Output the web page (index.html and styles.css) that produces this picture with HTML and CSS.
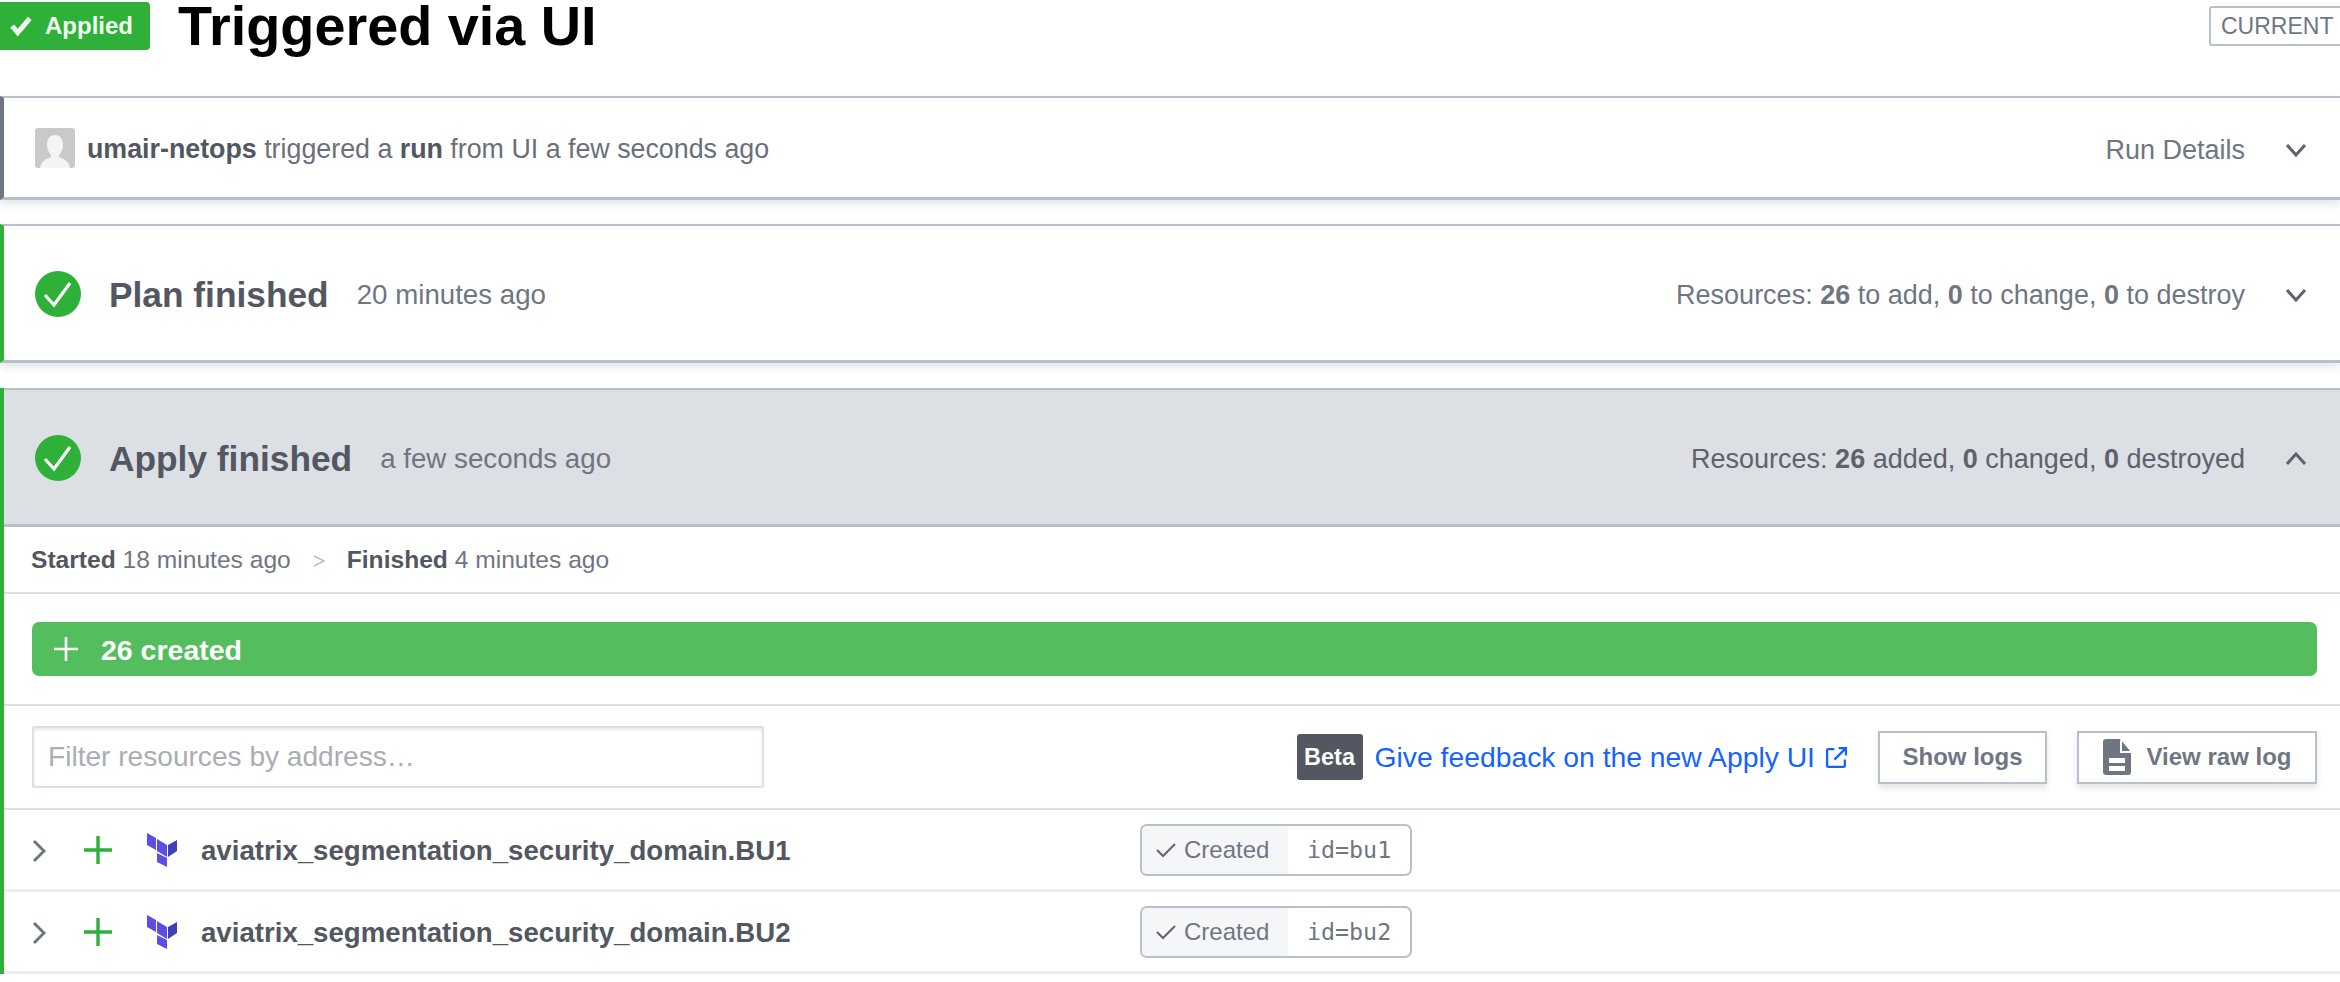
FILE: index.html
```html
<!DOCTYPE html>
<html lang="en">
<head>
<meta charset="utf-8">
<title>Triggered via UI</title>
<link rel="stylesheet" href="styles.css">
</head>
<body>
<header class="page-head">
  <span class="applied"><svg class="applied-check" viewBox="0 0 20 20"><path d="M2 10l5 6L18 3" fill="none" stroke="#f2fbf2" stroke-width="4.500"/></svg>Applied</span>
  <h1>Triggered via UI</h1>
  <span class="current">CURRENT</span>
</header>

<section class="card card-run">
  <div class="card-left">
    <svg class="avatar" viewBox="0 0 40 40"><rect width="40" height="40" rx="3" fill="#c9c9c9"/><path d="M20 7c5 0 8 4 8 10 0 4-2 8-4 10v2c5 2 10 4 11 11H5c1-7 6-9 11-11v-2c-2-2-4-6-4-10 0-6 3-10 8-10z" fill="#f4f4f4"/></svg>
    <span class="run-text"><b>umair-netops</b> triggered a <b>run</b> from UI a few seconds ago</span>
  </div>
  <div class="card-right">
    <span>Run Details</span>
    <svg class="chev" viewBox="0 0 22 14"><path d="M2 2l9 10 9-10" fill="none" stroke="currentColor" stroke-width="3"/></svg>
  </div>
</section>

<section class="card card-plan">
  <div class="card-left">
    <svg class="status" viewBox="0 0 46 46"><circle cx="23" cy="23" r="23" fill="#2eb039"/><path d="M10 24l9 10 16-22" fill="none" stroke="#fff" stroke-width="3.2"/></svg>
    <h2>Plan finished</h2>
    <span class="ago">20 minutes ago</span>
  </div>
  <div class="card-right">
    <span>Resources: <b>26</b> to add, <b>0</b> to change, <b>0</b> to destroy</span>
    <svg class="chev" viewBox="0 0 22 14"><path d="M2 2l9 10 9-10" fill="none" stroke="currentColor" stroke-width="3"/></svg>
  </div>
</section>

<section class="apply">
  <div class="card-head">
    <div class="card-left">
      <svg class="status" viewBox="0 0 46 46"><circle cx="23" cy="23" r="23" fill="#2eb039"/><path d="M10 24l9 10 16-22" fill="none" stroke="#fff" stroke-width="3.2"/></svg>
      <h2>Apply finished</h2>
      <span class="ago">a few seconds ago</span>
    </div>
    <div class="card-right dark">
      <span>Resources: <b>26</b> added, <b>0</b> changed, <b>0</b> destroyed</span>
      <svg class="chev" viewBox="0 0 22 14"><path d="M2 12l9-10 9 10" fill="none" stroke="currentColor" stroke-width="3"/></svg>
    </div>
  </div>

  <div class="times">
    <span><b>Started</b> 18 minutes ago</span>
    <svg class="sep" viewBox="0 0 14 14"><path d="M2 2l10 5-10 5" fill="none" stroke="#b8c0cc" stroke-width="1.6"/></svg>
    <span><b>Finished</b> 4 minutes ago</span>
  </div>

  <div class="summary">
    <div class="created-bar">
      <svg class="bar-plus" viewBox="0 0 24 24"><path d="M12 0v24M0 12h24" stroke="#fff" stroke-width="2.600"/></svg>
      <span>26 created</span>
    </div>
  </div>

  <div class="toolbar">
    <input class="filter" type="text" placeholder="Filter resources by address…">
    <div class="tools">
      <span class="beta">Beta</span>
      <a class="feedback">Give feedback on the new Apply UI<svg class="ext" viewBox="0 0 22 22"><path d="M9 3H3a1 1 0 0 0-1 1v15a1 1 0 0 0 1 1h15a1 1 0 0 0 1-1v-6M13 2h7v7M20 2L9 13" fill="none" stroke="#1563ff" stroke-width="2.200"/></svg></a>
      <button class="btn btn-show">Show logs</button>
      <button class="btn btn-raw"><svg class="doc" viewBox="0 0 28 36"><path d="M3 0h14l11 13v20a3 3 0 0 1-3 3H3a3 3 0 0 1-3-3V3a3 3 0 0 1 3-3z" fill="#6f7682"/><path d="M18 1v12h10" fill="none" stroke="#fff" stroke-width="2"/><path d="M6 19h16v5H6zM6 27h16v5H6z" fill="#fff"/></svg>View raw log</button>
    </div>
  </div>

  <div class="row">
    <svg class="row-chev" viewBox="0 0 14 24"><path d="M2 2l10 10L2 22" fill="none" stroke="#6f7682" stroke-width="3"/></svg>
    <svg class="row-plus" viewBox="0 0 28 28"><path d="M14 0v28M0 14h28" stroke="#2eb039" stroke-width="3.400"/></svg>
    <svg class="tf" viewBox="0 0 31 34"><path d="M0 0l9 5v12L0 12z" fill="#5c4ee5"/><path d="M10 6l10 6v12l-10-6z" fill="#5c4ee5"/><path d="M21 12l9-5v11l-9 6z" fill="#4040b2"/><path d="M10 20l10 5v9l-10-5z" fill="#5c4ee5"/></svg>
    <span class="res">aviatrix_segmentation_security_domain.BU1</span>
    <span class="pill"><span class="pill-state"><svg class="pill-check" viewBox="0 0 20 16"><path d="M1 8l6 6L19 2" fill="none" stroke="#5f6672" stroke-width="2"/></svg>Created</span><code>id=bu1</code></span>
  </div>
  <div class="row">
    <svg class="row-chev" viewBox="0 0 14 24"><path d="M2 2l10 10L2 22" fill="none" stroke="#6f7682" stroke-width="3"/></svg>
    <svg class="row-plus" viewBox="0 0 28 28"><path d="M14 0v28M0 14h28" stroke="#2eb039" stroke-width="3.400"/></svg>
    <svg class="tf" viewBox="0 0 31 34"><path d="M0 0l9 5v12L0 12z" fill="#5c4ee5"/><path d="M10 6l10 6v12l-10-6z" fill="#5c4ee5"/><path d="M21 12l9-5v11l-9 6z" fill="#4040b2"/><path d="M10 20l10 5v9l-10-5z" fill="#5c4ee5"/></svg>
    <span class="res">aviatrix_segmentation_security_domain.BU2</span>
    <span class="pill"><span class="pill-state"><svg class="pill-check" viewBox="0 0 20 16"><path d="M1 8l6 6L19 2" fill="none" stroke="#5f6672" stroke-width="2"/></svg>Created</span><code>id=bu2</code></span>
  </div>
</section>
</body>
</html>
```

FILE: styles.css
```css
* { box-sizing: border-box; }
html, body { margin: 0; height: 982px; overflow: hidden; background: #fff; }
body { font-family: "Liberation Sans", Arial, sans-serif; color: #525761; font-size: 27px; }
b { font-weight: 700; }
h1, h2 { margin: 0; }

.page-head { height: 96px; display: flex; align-items: flex-start; position: relative; }
.applied { width: 150px; height: 48px; margin-top: 2px; background: #2eb039; color: #f2fbf2; border-radius: 0 4px 4px 0; font-size: 24px; font-weight: 700; display: flex; align-items: center; padding-left: 10px; }
.applied-check { width: 22px; height: 22px; margin-right: 13px; }
.page-head h1 { margin-left: 28px; color: #000; font-size: 55.800px; line-height: 52px; font-weight: 700; }
.current { position: absolute; left: 2209px; top: 6px; width: 160px; height: 40px; border: 2px solid #b8c0cc; border-radius: 3px; color: #6f7682; font-size: 23px; line-height: 36px; padding-left: 10px; }

.card { display: flex; justify-content: space-between; align-items: center; background: #fff; border-top: 2px solid #b8c0cc; border-bottom: 3px solid #b8c0cc; box-shadow: 0 4px 8px rgba(100,110,130,.18); border-left: 4px solid #2eb039; padding: 4px 33px 0 31px; }
.card-run { height: 104px; border-left-color: #6f7682; margin-bottom: 24px; }
.card-plan { height: 139px; margin-bottom: 25px; }
.card-left, .card-right { display: flex; align-items: center; }
.card-right { color: #6f7682; }
.card-right.dark { color: #5d626d; }
.card-right span { line-height: 30px; }
.chev { width: 22px; height: 14px; margin-left: 40px; color: #5d626d; }
.avatar { width: 40px; height: 40px; margin-right: 12px; margin-top: -3px; }
.run-text { color: #6a6f7a; font-size: 26.800px; }
.run-text b { color: #525761; }

.status { width: 46px; height: 46px; margin-right: 28px; flex: none; margin-top: -3px; }
h2 { font-size: 35.300px; font-weight: 700; color: #525761; line-height: 44px; }
.ago { margin-left: 28px; color: #6f7682; font-size: 27.700px; }

.apply { border-left: 4px solid #2eb039; }
.card-head { height: 139px; display: flex; justify-content: space-between; align-items: center; background: #dcdfe4; border-top: 2px solid #b8c0cc; border-bottom: 3px solid #b8c0cc; padding: 4px 33px 0 31px; }

.times { height: 67px; display: flex; align-items: center; padding-left: 27px; border-bottom: 2px solid #dcdfe4; font-size: 24.600px; color: #6f7682; }
.times b { color: #525761; }
.sep { width: 14px; height: 14px; margin: 3px 21px 0; }

.summary { padding: 28px 23px 28px 28px; border-bottom: 2px solid #dcdfe4; height: 112px; }
.created-bar { height: 54px; background: #54bd5d; border-radius: 7px; display: flex; align-items: center; color: #fff; font-weight: 700; font-size: 28.500px; padding-left: 22px; }
.created-bar span { margin-top: 2px; }
.bar-plus { width: 24px; height: 24px; margin-right: 23px; }

.toolbar { height: 104px; display: flex; justify-content: space-between; align-items: center; padding: 0 23px 0 28px; border-bottom: 2px solid #dcdfe4; }
.filter { width: 732px; height: 62px; border: 2px solid #dcdfe4; border-radius: 2px; box-shadow: inset 0 2px 3px rgba(100,110,130,.15); padding: 0 14px; font: 28.100px "Liberation Sans", Arial, sans-serif; color: #525761; outline: none; }
.filter::placeholder { color: #a9adb4; opacity: 1; }
.tools { display: flex; align-items: center; }
.beta { width: 66px; height: 46px; background: #525761; color: #fff; font-weight: 700; font-size: 23.500px; border-radius: 3px; display: flex; align-items: center; justify-content: center; margin-right: 12px; }
.feedback { color: #1563ff; font-size: 28.300px; display: flex; align-items: center; margin-right: 30px; }
.ext { width: 23px; height: 23px; margin-left: 10px; }
.btn { height: 53px; background: #fff; border: 2px solid #b8c0cc; box-shadow: 0 4px 6px rgba(100,110,130,.18); color: #6f7682; font: 700 24px "Liberation Sans", Arial, sans-serif; display: flex; align-items: center; justify-content: center; padding: 0; }
.btn-show { width: 169px; margin-right: 30px; }
.btn-raw { width: 240px; }
.doc { width: 28px; height: 36px; margin-right: 16px; }

.row { height: 82px; display: flex; align-items: center; position: relative; border-bottom: 3px solid #eceef1; padding-left: 28px; }
.row-chev { width: 14px; height: 24px; margin: 2px 38px 0 0; }
.row-plus { width: 28px; height: 28px; margin-right: 35px; }
.tf { width: 31px; height: 34px; margin-right: 23px; }
.res { font-size: 27.640px; font-weight: 700; color: #525761; width: 939px; flex: none; margin-top: 2px; }
.pill { display: flex; height: 52px; border: 2px solid #b8c0cc; border-radius: 7px; overflow: hidden; width: 272px; color: #6f7682; }
.pill-state { width: 146px; background: #f5f6f8; display: flex; align-items: center; font-size: 24px; padding-left: 14px; }
.pill-check { width: 20px; height: 16px; margin-right: 8px; }
.pill code { font: 23.300px "DejaVu Sans Mono", monospace; display: flex; align-items: center; padding-left: 19px; }
```
